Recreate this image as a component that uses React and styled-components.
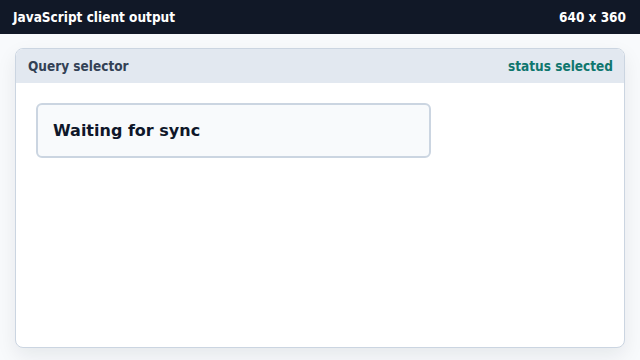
import styled, { createGlobalStyle } from "styled-components";

const Global = createGlobalStyle`
  html, body { margin: 0; padding: 0; }
  body {
    width: 640px;
    height: 360px;
    overflow: hidden;
    background: #f8fafc;
    font-family: "DejaVu Sans", "Noto Sans", sans-serif;
  }
`;

const Page = styled.div`
  width: 640px;
  height: 360px;
  display: flex;
  flex-direction: column;
`;

const TopBar = styled.div`
  height: 34px;
  flex: none;
  background: #111827;
  color: #ffffff;
  display: flex;
  align-items: center;
  justify-content: space-between;
  padding: 0 14px 0 13px;
  font-size: 13.5px;
  font-weight: 700;
  font-family: "DejaVu Sans Condensed", "DejaVu Sans", sans-serif;
`;

const Stage = styled.div`
  flex: 1;
  padding: 14px 15px 12px 15px;
  display: flex;
`;

const Panel = styled.div`
  flex: 1;
  display: flex;
  flex-direction: column;
  background: #ffffff;
  border: 1px solid #cbd5e1;
  border-radius: 8px;
  overflow: hidden;
  box-shadow: 0 8px 20px rgba(15, 23, 42, 0.08);
`;

const PanelHeader = styled.div`
  height: 34px;
  flex: none;
  background: #e2e8f0;
  display: flex;
  align-items: center;
  justify-content: space-between;
  padding: 0 11px 0 12px;
  font-size: 13.5px;
  font-weight: 700;
  font-family: "DejaVu Sans Condensed", "DejaVu Sans", sans-serif;
`;

const Title = styled.span`
  color: #334155;
`;

const Status = styled.span`
  color: ${(p) => p.$color};
`;

const PanelBody = styled.div`
  flex: 1;
  padding: 20px 20px;
`;

const SyncBox = styled.div`
  width: 395px;
  height: 55px;
  box-sizing: border-box;
  display: flex;
  align-items: center;
  padding: 0 15px;
  background: #f8fafc;
  border: 2px solid #cbd5e1;
  border-radius: 6px;
  color: #0f172a;
  font-size: 16px;
  font-weight: 700;
`;

export default function App() {
  return (
    <Page>
      <Global />
      <TopBar>
        <span>JavaScript client output</span>
        <span>640 x 360</span>
      </TopBar>
      <Stage>
        <Panel>
          <PanelHeader>
            <Title>Query selector</Title>
            <Status $color="#0f766e">status selected</Status>
          </PanelHeader>
          <PanelBody>
            <SyncBox>Waiting for sync</SyncBox>
          </PanelBody>
        </Panel>
      </Stage>
    </Page>
  );
}
